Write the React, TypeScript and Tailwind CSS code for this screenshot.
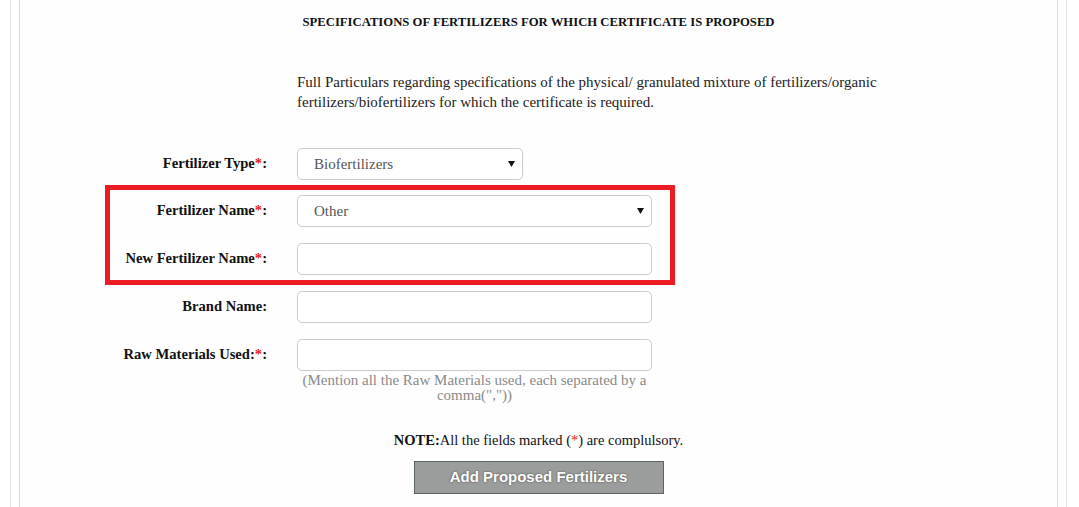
import React from 'react';

const serif = "font-['Liberation_Serif',serif]";

const Req = () => <span className="text-[#ed1c24]">*</span>;

const Caret = () => (
    <svg width="7" height="6" viewBox="0 0 7 6" className="shrink-0">
        <path d="M0 0 L7 0 L3.5 6 Z" fill="#111" />
    </svg>
);

const FakeSelect: React.FC<{ value: string; width: string }> = ({ value, width }) => (
    <div className={`${width} h-[32px] flex items-center justify-between pl-[16px] pr-[7px] border border-[#cccccc] rounded-[5px] bg-white text-[15px] text-[#555555]`}>
        <span>{value}</span>
        <Caret />
    </div>
);

const TextBox = () => <div className="w-[355px] h-[32px] border border-[#cccccc] rounded-[5px] bg-white" />;

const Row: React.FC<{ label: React.ReactNode; children: React.ReactNode; className?: string }> = ({ label, children, className }) => (
    <div className={`flex items-center ${className ?? ''}`}>
        <div className="w-[157px] whitespace-nowrap text-right text-[14.6px] font-bold text-[#111]">{label}</div>
        <div className="ml-[30px]">{children}</div>
    </div>
);

export default function App() {
    return (
        <div className={`w-[1079px] h-[507px] bg-white overflow-hidden ${serif}`}>
            <div className="ml-[10px] w-[1057px] h-full border-x border-[#e2e2e2]">
                <div className="mx-[8px] h-full border-x border-[#dcdcdc] bg-[#fefefe]">
                    {/* Heading */}
                    <h2 className="pt-[13px] text-center text-[12.7px] font-bold text-[#111] leading-[18px]">
                        SPECIFICATIONS OF FERTILIZERS FOR WHICH CERTIFICATE IS PROPOSED
                    </h2>

                    <p className="mt-[41px] ml-[277px] w-[640px] text-[15px] leading-[20px] text-[#222]">
                        Full Particulars regarding specifications of the physical/ granulated mixture of fertilizers/organic fertilizers/biofertilizers for which the certificate is required.
                    </p>

                    {/* Form */}
                    <div className="ml-[85px] w-[570px] mt-[36px]">
                        <Row label={<>Fertilizer Type<Req />:</>} className="px-[5px]">
                            <FakeSelect value="Biofertilizers" width="w-[226px]" />
                        </Row>

                        <div className="mt-[5px] border-[5px] border-[#ed1c24] pt-[5px] pb-[5px] flex flex-col gap-[16px]">
                            <Row label={<>Fertilizer Name<Req />:</>}>
                                <FakeSelect value="Other" width="w-[355px]" />
                            </Row>
                            <Row label={<>New Fertilizer Name<Req />:</>}>
                                <TextBox />
                            </Row>
                        </div>

                        <Row label="Brand Name:" className="px-[5px] mt-[6px]">
                            <TextBox />
                        </Row>

                        <Row label={<>Raw Materials Used:<Req />:</>} className="px-[5px] mt-[16px]">
                            <TextBox />
                        </Row>

                        <div className="ml-[192px] w-[355px] mt-[2px] text-center text-[15px] leading-[15px] text-[#8a8a8a]">
                            (Mention all the Raw Materials used, each separated by a comma(","))
                        </div>
                    </div>

                    <p className="mt-[28px] text-center text-[14.5px] text-[#111] leading-[18px]">
                        <span className="font-bold">NOTE:</span>All the fields marked (<Req />) are complulsory.
                    </p>

                    <div className="flex justify-center mt-[12px]">
                        <button className="w-[250px] h-[33px] bg-[#9a9d9b] border border-[#5b6662] text-white text-[15px] font-bold font-['Liberation_Sans',sans-serif] [text-shadow:0_0_2px_#444]">
                            Add Proposed Fertilizers
                        </button>
                    </div>
                </div>
            </div>
        </div>
    );
}
